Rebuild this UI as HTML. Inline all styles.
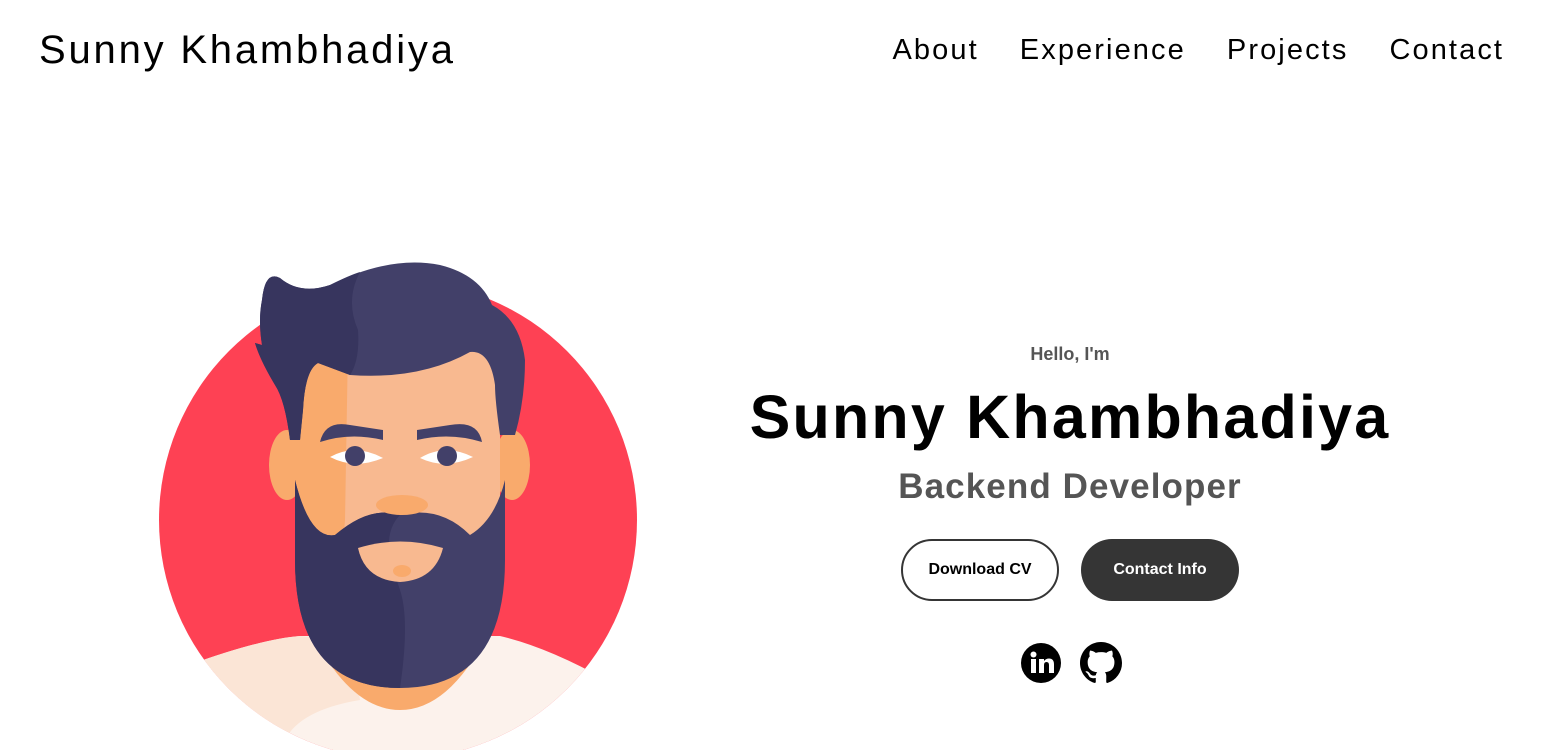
<!DOCTYPE html>
<html><head><meta charset="utf-8"><style>
body{margin:0;width:1542px;height:750px;overflow:hidden;background:#fff;font-family:"Liberation Sans",sans-serif;position:relative}
.logo{position:absolute;left:39px;top:28px;font-size:40px;color:#000;letter-spacing:2.8px}
nav{position:absolute;top:34px;right:40px;display:flex;gap:41px;font-size:29px;color:#000;letter-spacing:2.1px}
nav span:last-child{margin-right:-2.1px}
.t{position:absolute;left:700px;width:740px;text-align:center}
.btn{position:absolute;top:539px;height:62px;width:158px;border-radius:32px;font-weight:bold;font-size:16px;display:flex;align-items:center;justify-content:center;box-sizing:border-box}
</style></head><body>
<div class="logo">Sunny Khambhadiya</div>
<nav><span>About</span><span>Experience</span><span>Projects</span><span>Contact</span></nav>
<svg style="position:absolute;left:0;top:0" width="800" height="750">
<defs><clipPath id="c"><circle cx="398" cy="520" r="239"/></clipPath></defs>
<circle cx="398" cy="520" r="239" fill="#fe4154"/>
<g clip-path="url(#c)">
<path d="M150 680 Q250 640 300 636 L500 636 Q560 650 640 700 L640 760 L150 760Z" fill="#fcf2ec"/>
<path d="M150 680 Q250 640 300 636 L350 640 L360 700 Q300 710 285 740 L150 760Z" fill="#fbe5d6"/>
<path d="M310 630 L490 630 Q450 710 400 710 Q350 710 310 630Z" fill="#f9aa6c"/>
</g>
<ellipse cx="287" cy="465" rx="18" ry="35" fill="#f9aa6c"/>
<ellipse cx="512" cy="465" rx="18" ry="35" fill="#f9aa6c"/>
<path d="M298 360 Q300 340 330 345 L470 345 Q500 345 500 380 L500 520 Q480 580 400 590 Q320 580 298 520Z" fill="#f8b990"/>
<path d="M298 360 Q300 340 330 345 L348 345 L345 520 L340 580 Q310 560 298 520Z" fill="#f9aa6c"/>
<path d="M295 480 Q310 540 335 535 Q370 505 400 515 Q440 505 470 535 Q495 520 505 480 L505 560 Q505 688 400 688 Q295 688 295 560Z" fill="#424069"/>
<path d="M295 480 Q310 540 335 535 Q370 505 400 515 Q385 530 390 560 L400 590 Q410 620 400 688 Q295 688 295 560Z" fill="#37355e"/>
<path d="M358 548 Q400 535 443 548 Q435 580 400 582 Q365 580 358 548Z" fill="#f8b990"/>
<ellipse cx="402" cy="571" rx="9" ry="6" fill="#f9aa6c"/>
<ellipse cx="402" cy="505" rx="26" ry="10" fill="#f9aa6c"/>
<path d="M262 300 Q265 270 280 278 Q300 295 330 285 Q390 255 440 265 Q480 275 492 305 Q520 320 525 360 Q525 400 515 435 L500 435 Q495 400 495 385 Q490 350 470 352 Q420 380 350 375 L318 363 Q305 370 303 410 L300 440 L290 440 Q285 400 275 385 Q260 360 255 343 L262 345 Q258 320 262 300Z" fill="#424069"/>
<path d="M262 300 Q265 270 280 278 Q300 295 330 285 Q350 275 360 272 Q345 300 358 330 Q360 360 350 375 L318 363 Q305 370 303 410 L300 440 L290 440 Q285 400 275 385 Q260 360 255 343 L262 345 Q258 320 262 300Z" fill="#37355e"/>
<path d="M320 442 Q325 420 350 425 L383 430 L383 440 Q350 432 320 442Z" fill="#424069"/>
<path d="M417 440 L417 430 L450 425 Q478 420 482 442 Q450 432 417 440Z" fill="#424069"/>
<path d="M330 457 Q355 443 383 458 Q355 470 330 457Z" fill="#fff"/>
<path d="M420 458 Q445 443 473 457 Q445 470 420 458Z" fill="#fff"/>
<circle cx="355" cy="456" r="10" fill="#424069"/><circle cx="447" cy="456" r="10" fill="#424069"/>
</svg>
<div class="t" style="top:344px;font-size:18px;font-weight:bold;color:#555">Hello, I'm</div>
<div class="t" style="top:382px;font-size:61px;font-weight:bold;color:#000;letter-spacing:2.2px">Sunny Khambhadiya</div>
<div class="t" style="top:467px;font-size:35px;font-weight:bold;color:#555;letter-spacing:1.1px">Backend Developer</div>
<div class="btn" style="left:901px;border:2px solid #353535;color:#000">Download CV</div>
<div class="btn" style="left:1081px;background:#353535;color:#fff">Contact Info</div>
<svg style="position:absolute;left:1020px;top:642px" width="42" height="42" viewBox="0 0 42 42"><circle cx="21" cy="21" r="20" fill="#000"/><rect x="11" y="17" width="5" height="14" fill="#fff"/><circle cx="13.5" cy="12.5" r="3" fill="#fff"/><path d="M19 17h5v2q2-2.5 5-2.5q5 0 5 6v8.5h-5v-8q0-3-2.5-3t-2.5 3v8h-5z" fill="#fff"/></svg>
<svg style="position:absolute;left:1080px;top:642px" width="42" height="42" viewBox="0 0 16 16"><path fill="#000" d="M8 0C3.58 0 0 3.58 0 8c0 3.54 2.29 6.53 5.47 7.59.4.07.55-.17.55-.38 0-.19-.01-.82-.01-1.49-2.01.37-2.53-.49-2.69-.94-.09-.23-.48-.94-.82-1.13-.28-.15-.68-.52-.01-.53.63-.01 1.08.58 1.23.82.72 1.21 1.87.87 2.33.66.07-.52.28-.87.51-1.07-1.78-.2-3.64-.89-3.64-3.95 0-.87.31-1.59.82-2.15-.08-.2-.36-1.02.08-2.12 0 0 .67-.21 2.2.82.64-.18 1.32-.27 2-.27.68 0 1.36.09 2 .27 1.53-1.04 2.2-.82 2.2-.82.44 1.1.16 1.92.08 2.12.51.56.82 1.27.82 2.15 0 3.07-1.87 3.75-3.65 3.95.29.25.54.73.54 1.48 0 1.07-.01 1.93-.01 2.2 0 .21.15.46.55.38A8.013 8.013 0 0016 8c0-4.42-3.58-8-8-8z"/></svg>
</body></html>
